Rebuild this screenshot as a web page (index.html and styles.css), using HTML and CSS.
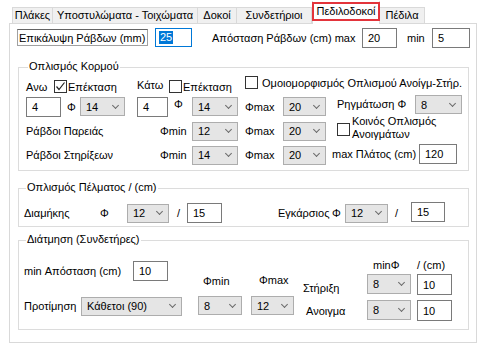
FILE: index.html
```html
<!DOCTYPE html>
<html lang="el">
  <head>
    <title>Πεδιλοδοκοί</title>
    <meta charset="UTF-8" />
    <link rel="stylesheet" href="styles.css">
  </head>
  <body>
    <div class="tabs">
      <div class="tab tab--first">Πλάκες</div>
      <div class="tab">Υποστυλώματα - Τοιχώματα</div>
      <div class="tab">Δοκοί</div>
      <div class="tab">Συνδετήριοι</div>
      <div class="tab tab--active"><span class="tab__mark">Πεδιλοδοκοί</span></div>
      <div class="tab">Πέδιλα</div>
    </div>

    <div class="page">

      <div class="row row--top">
        <span class="textbox textbox--caption w131">Επικάλυψη Ράβδων (mm)</span>
        <span class="textbox textbox--focus ml7 w37"><span class="selected">25</span></span>
        <span class="lbl ml20 w150">Απόσταση Ράβδων (cm) max</span>
        <span class="textbox w35">20</span>
        <span class="lbl ml10 w25">min</span>
        <span class="textbox w38">5</span>
      </div>

      <div class="group group--web">
        <div class="group__title">Οπλισμός Κορμού</div>
        <div class="row row--a">
          <span class="lbl w28">Ανω</span>
          <span class="check">
            <svg width="11" height="11" viewBox="0 0 11 11"><polyline points="1.5,5.5 4,8.5 9.5,1.5" fill="none" stroke="#222" stroke-width="1.2"/></svg>
          </span>
          <span class="lbl ml1 w69">Επέκταση</span>
          <span class="lbl w32 up2">Κάτω</span>
          <span class="check"></span>
          <span class="lbl ml1 w62">Επέκταση</span>
          <span class="check up4"></span>
          <span class="lbl ml4 up4">Ομοιομορφισμός Οπλισμού Ανοίγμ-Στήρ.</span>
        </div>
        <div class="row row--b">
          <span class="textbox w35">4</span>
          <span class="lbl ml6 w13">Φ</span>
          <span class="combo w45">14</span>
          <span class="textbox ml12 w31">4</span>
          <span class="lbl ml6 w18 up3">Φ</span>
          <span class="combo w46">14</span>
          <span class="lbl ml7 w38">Φmax</span>
          <span class="combo w43">20</span>
          <span class="lbl ml11 w78 up3">Ρηγμάτωση Φ</span>
          <span class="combo w47 up2">8</span>
        </div>
        <div class="row row--c">
          <span class="lbl w134">Ράβδοι Παρειάς</span>
          <span class="lbl w32">Φmin</span>
          <span class="combo w46">12</span>
          <span class="lbl ml7 w38">Φmax</span>
          <span class="combo w43">20</span>
          <span class="check ml11 up2"></span>
          <span class="lbl lbl--two ml2 up3">Κοινός Οπλισμός<br>Ανοιγμάτων</span>
        </div>
        <div class="row row--d">
          <span class="lbl w134">Ράβδοι Στηρίξεων</span>
          <span class="lbl w32">Φmin</span>
          <span class="combo w46">14</span>
          <span class="lbl ml7 w38">Φmax</span>
          <span class="combo w43">20</span>
          <span class="lbl ml6 w87 up1">max Πλάτος (cm)</span>
          <span class="textbox w38 up1">120</span>
        </div>
      </div>

      <div class="group group--footing">
        <div class="group__title">Οπλισμός Πέλματος / (cm)</div>
        <div class="row row--footing">
          <span class="lbl w76">Διαμήκης</span>
          <span class="lbl w27">Φ</span>
          <span class="combo w42">12</span>
          <span class="lbl ml8 w10">/</span>
          <span class="textbox w35">15</span>
          <span class="lbl ml56 w54">Εγκάρσιος</span>
          <span class="lbl w13">Φ</span>
          <span class="combo w43">12</span>
          <span class="lbl ml7 w16">/</span>
          <span class="textbox w34 up1">15</span>
        </div>
      </div>

      <div class="group group--shear">
        <div class="group__title">Διάτμηση (Συνδετήρες)</div>
        <div class="shear">
          <div class="shear__col w174">
            <div class="shear__line mt15">
              <span class="lbl w109">min Απόσταση (cm)</span>
              <span class="textbox w35">10</span>
            </div>
            <div class="shear__line mt15">
              <span class="lbl w57">Προτίμηση</span>
              <span class="combo w101">Κάθετοι (90)</span>
            </div>
          </div>
          <div class="shear__col w44">
            <span class="shear__head mt28 pl5">Φmin</span>
            <span class="combo mt8">8</span>
          </div>
          <div class="shear__col ml9 w43">
            <span class="shear__head mt27 pl8">Φmax</span>
            <span class="combo mt9">12</span>
          </div>
          <div class="shear__col ml9 w64">
            <span class="shear__head mt35">Στήριξη</span>
            <span class="shear__head mt9 pl3">Ανοιγμα</span>
          </div>
          <div class="shear__col w44">
            <span class="shear__head mt12 pl6">minΦ</span>
            <span class="combo h20 mt2">8</span>
            <span class="combo h20 mt6">8</span>
          </div>
          <div class="shear__col ml6 w35">
            <span class="shear__head mt12">/ (cm)</span>
            <span class="textbox h21 mt2">10</span>
            <span class="textbox h21 mt5">10</span>
          </div>
        </div>
      </div>

    </div>
  </body>
</html>
```

FILE: styles.css
```css
body {
  margin: 0;
  font-family: 'Liberation Sans', Arial, sans-serif;
  font-size: 11px;
  color: #000000;
  background: #ffffff;
}

/* tab strip */

.tabs {
  display: flex;
  align-items: flex-end;
  height: 23px;
  padding-left: 12px;
}

.tab {
  box-sizing: border-box;
  height: 16px;
  border: 1px solid #d9d9d9;
  border-left: none;
  border-bottom: none;
  background: #f0f0f0;
  line-height: 15px;
  text-align: center;
  white-space: nowrap;
}

.tab--first {
  border-left: 1px solid #d9d9d9;
}

.tab:nth-child(1) { width: 41px; }
.tab:nth-child(2) { width: 145px; }
.tab:nth-child(3) { width: 39px; }
.tab:nth-child(4) { width: 75px; }
.tab:nth-child(5) { width: 68px; }
.tab:nth-child(6) { width: 45px; }

.tab--active {
  position: relative;
  z-index: 1;
  height: 23px;
  margin-bottom: -1px;
  border: 1px solid #d9d9d9;
  border-top: none;
  border-bottom: none;
  background: #ffffff;
}

.tab__mark {
  display: block;
  box-sizing: border-box;
  height: 19px;
  margin: 1px -1px 0;
  border: 2px solid #e3343b;
  line-height: 14px;
}

/* tab page */

.page {
  box-sizing: border-box;
  width: 468px;
  height: 320px;
  margin-left: 9px;
  padding-top: 4px;
  border: 1px solid #d9d9d9;
}

.row {
  display: flex;
  align-items: center;
  white-space: nowrap;
}

.row--top {
  height: 19px;
  padding-left: 7px;
}

/* group boxes */

.group {
  box-sizing: border-box;
  width: 451px;
  margin-left: 8px;
  border: 1px solid #dcdcdc;
}

.group__title {
  width: fit-content;
  height: 13px;
  margin: -8px 0 0 2px;
  padding: 0 1px;
  line-height: 13px;
  background: #ffffff;
}

.group--web {
  margin-top: 20px;
  padding: 0 0 5px 7px;
}

.group--footing {
  margin-top: 17px;
  padding: 0 0 3px 5px;
}

.group--shear {
  margin-top: 13px;
  padding-left: 5px;
}

.row--a { height: 15px; margin-top: 6px; }
.row--b { height: 21px; margin-top: 2px; }
.row--c { height: 20px; margin-top: 4px; }
.row--d { height: 20px; margin-top: 4px; }
.row--footing { height: 20px; margin-top: 9px; }

.shear {
  display: flex;
  height: 83px;
}

.shear__col {
  display: flex;
  flex-direction: column;
}

.shear__line {
  display: flex;
  align-items: center;
  height: 20px;
  white-space: nowrap;
}

.shear__head {
  display: block;
  height: 14px;
  line-height: 14px;
  white-space: nowrap;
}

/* controls */

.lbl {
  display: block;
  flex-shrink: 0;
  white-space: nowrap;
}

.lbl--two {
  line-height: 13px;
}

.textbox {
  display: flex;
  align-items: center;
  flex-shrink: 0;
  box-sizing: border-box;
  height: 20px;
  padding-left: 5px;
  border: 1px solid #7a7a7a;
  background: #ffffff;
}

.textbox--caption {
  height: 17px;
  padding-left: 1px;
  border-color: #a0a0a0;
  border-top-color: #646464;
}

.textbox--focus {
  height: 19px;
  padding-left: 3px;
  border-color: #0078d7;
}

.selected {
  padding: 0 1px;
  line-height: 13px;
  color: #ffffff;
  background: #0078d7;
}

.combo {
  display: flex;
  align-items: center;
  justify-content: space-between;
  flex-shrink: 0;
  box-sizing: border-box;
  height: 19px;
  padding: 0 6px 0 5px;
  border: 1px solid #adadad;
  background: #e5e5e5;
  white-space: nowrap;
}

.combo::after {
  content: '';
  width: 4px;
  height: 4px;
  margin-top: -3px;
  border-right: 1px solid #6a6a6a;
  border-bottom: 1px solid #6a6a6a;
  transform: rotate(45deg);
}

.check {
  display: flex;
  align-items: center;
  justify-content: center;
  flex-shrink: 0;
  box-sizing: border-box;
  width: 13px;
  height: 13px;
  border: 1px solid #333333;
  background: #ffffff;
}

/* helpers */

.w10 { width: 10px; }
.w13 { width: 13px; }
.w16 { width: 16px; }
.w18 { width: 18px; }
.w25 { width: 25px; }
.w27 { width: 27px; }
.w28 { width: 28px; }
.w31 { width: 31px; }
.w32 { width: 32px; }
.w34 { width: 34px; }
.w35 { width: 35px; }
.w37 { width: 37px; }
.w38 { width: 38px; }
.w42 { width: 42px; }
.w43 { width: 43px; }
.w44 { width: 44px; }
.w45 { width: 45px; }
.w46 { width: 46px; }
.w47 { width: 47px; }
.w54 { width: 54px; }
.w57 { width: 57px; }
.w62 { width: 62px; }
.w64 { width: 64px; }
.w69 { width: 69px; }
.w76 { width: 76px; }
.w78 { width: 78px; }
.w87 { width: 87px; }
.w101 { width: 101px; }
.w109 { width: 109px; }
.w131 { width: 131px; }
.w134 { width: 134px; }
.w150 { width: 150px; }
.w174 { width: 174px; }

.h20 { height: 20px; }
.h21 { height: 21px; }

.ml1 { margin-left: 1px; }
.ml2 { margin-left: 2px; }
.ml4 { margin-left: 4px; }
.ml6 { margin-left: 6px; }
.ml7 { margin-left: 7px; }
.ml8 { margin-left: 8px; }
.ml9 { margin-left: 9px; }
.ml10 { margin-left: 10px; }
.ml11 { margin-left: 11px; }
.ml12 { margin-left: 12px; }
.ml20 { margin-left: 20px; }
.ml56 { margin-left: 56px; }

.mt2 { margin-top: 2px; }
.mt5 { margin-top: 5px; }
.mt6 { margin-top: 6px; }
.mt8 { margin-top: 8px; }
.mt9 { margin-top: 9px; }
.mt12 { margin-top: 12px; }
.mt15 { margin-top: 15px; }
.mt27 { margin-top: 27px; }
.mt28 { margin-top: 28px; }
.mt35 { margin-top: 35px; }

.pl3 { padding-left: 3px; }
.pl5 { padding-left: 5px; }
.pl6 { padding-left: 6px; }
.pl8 { padding-left: 8px; }

/* lift an item inside a centred flex row */
.up1 { margin-bottom: 2px; }
.up2 { margin-bottom: 4px; }
.up3 { margin-bottom: 6px; }
.up4 { margin-bottom: 8px; }
```
